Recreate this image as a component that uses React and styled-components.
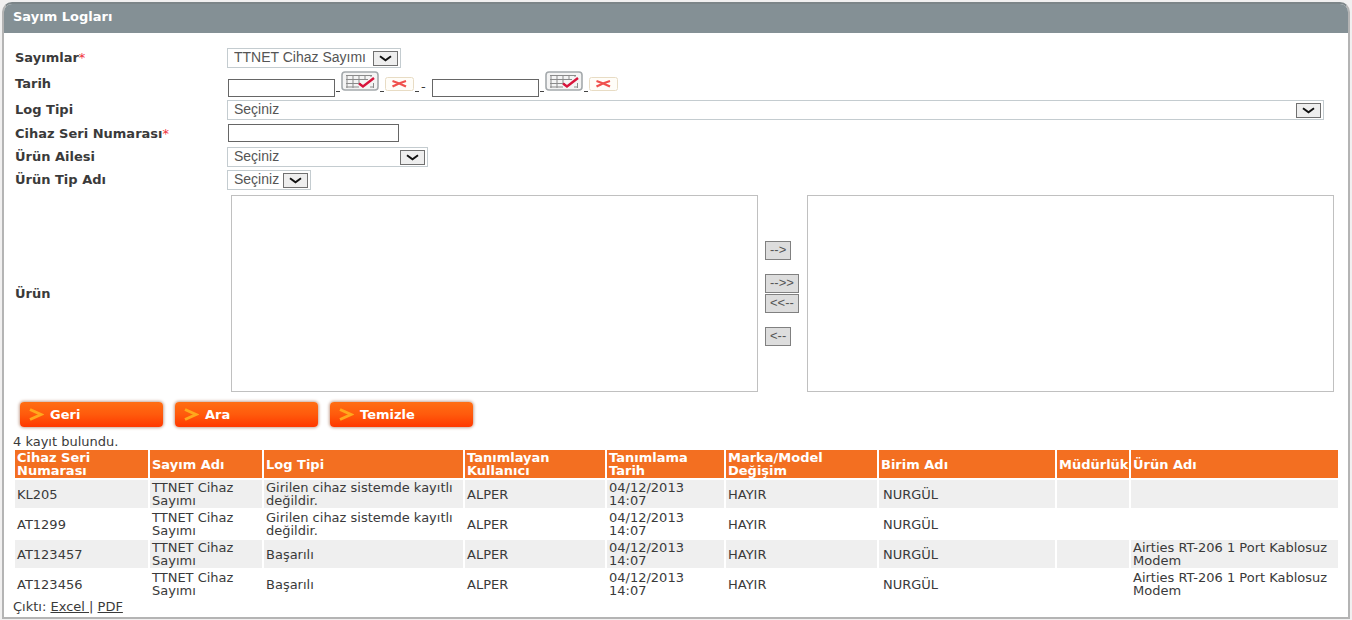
import React, { useState } from 'react'
import styled, { createGlobalStyle } from 'styled-components'

const GlobalStyle = createGlobalStyle`
  * {
    box-sizing: border-box;
  }

  body {
    margin: 0;
    padding: 2px;
    background: #f1f0f0;
    color: #3a3a3a;
    font: 13px/13px Verdana, 'DejaVu Sans', sans-serif;
  }
`

const Panel = styled.main`
  background: white;
  border: 2px solid #b4b4b4;
  border-top-color: #7c8588;
  border-radius: 10px 10px 0 0;
  overflow: hidden;
`

const Title = styled.h1`
  margin: 0;
  padding: 6px 9px 10px;
  background: #849095;
  color: white;
  font-size: 13px;
  line-height: 13px;
`

const Body = styled.div`
  padding: 13px 8px 4px 9px;
`

const Form = styled.form`
  display: flex;
  flex-direction: column;
`

const Row = styled.div`
  display: flex;
  align-items: center;
  min-height: ${props => props.$height || 23}px;
  padding-right: 6px;
`

const Label = styled.label`
  flex: 0 0 214px;
  padding-left: 2px;
  font-weight: bold;
`

const Star = styled.span`
  color: #f0323c;
  font-weight: normal;
`

const SelectBox = styled.span`
  position: relative;
  display: flex;
  width: ${props => props.$width || '100%'};
  margin-right: 10px;
`

const Select = styled.select`
  appearance: none;
  width: 100%;
  height: 20px;
  padding: 0 28px 2px 6px;
  border: 1px solid #c4ccd0;
  border-radius: 0;
  background: white;
  color: #555;
  font: 14px/16px Arial, 'Liberation Sans', sans-serif;
`

const Arrow = styled.span`
  position: absolute;
  top: 3px;
  right: 3px;
  display: flex;
  align-items: center;
  justify-content: center;
  width: 25px;
  height: 15px;
  border: 1px solid #707070;
  background: #eee;
  pointer-events: none;
`

const Input = styled.input`
  width: ${props => props.$width}px;
  height: 18px;
  margin-left: 1px;
  padding: 0 4px;
  border: 1px solid #666;
  font: 14px/16px Arial, 'Liberation Sans', sans-serif;
`

const Dates = styled.div`
  display: flex;
  align-items: flex-end;
  height: 26px;
`

const Gap = styled.span`
  width: 4px;
  height: 6px;
  margin: 0 1px;
  border-top: 1px solid #444;
`

const Hyphen = styled.span`
  width: 11px;
  padding-left: 1px;
  height: 17px;
`

const IconButton = styled.button`
  display: flex;
  align-self: ${props => props.$align || 'flex-start'};
  padding: 0;
  border: 0;
  background: none;
`

const Lists = styled.div`
  display: flex;
  flex: 1;
  gap: 7px;
  padding-left: 4px;
`

const List = styled.select`
  flex: 1;
  min-width: 0;
  height: 197px;
  border: 1px solid #c0c0c0;
  border-radius: 0;
  background: white;
`

const Moves = styled.div`
  display: flex;
  flex-direction: column;
  align-items: flex-start;
  width: 35px;
  padding-top: 46px;
`

const Move = styled.button`
  height: 19px;
  margin-bottom: ${props => props.$after}px;
  padding: 0 4px 1px;
  border: 1px solid #808080;
  background: #ddd;
  color: #555;
  font: 13px/14px Arial, 'Liberation Sans', sans-serif;
`

const Actions = styled.div`
  display: flex;
  gap: 12px;
  padding: 6px 7px 8px;
`

const Action = styled.button`
  display: flex;
  align-items: center;
  gap: 6px;
  width: 143px;
  height: 25px;
  padding: 0 9px;
  border: 0;
  border-radius: 4px;
  background: linear-gradient(#ff6e14, #ff5a0c 50%, #ff3800);
  box-shadow: 0 0 3px 1px #c8a898;
  color: white;
  font: bold 13px/13px Verdana, 'DejaVu Sans', sans-serif;
`

const Table = styled.table`
  width: 100%;
  table-layout: fixed;
  border-spacing: 2px;
`

const Th = styled.th`
  height: 28px;
  padding: 1px 0 1px 2px;
  background: #f36f21;
  color: white;
  text-align: left;
`

const Td = styled.td`
  height: 28px;
  padding: 1px 0 1px ${props => props.$indent ? 4 : 2}px;
`

const Tr = styled.tr`
  &:nth-child(odd) td {
    background: #efefef;
  }
`

const Link = styled.a`
  color: #3a3a3a;
  white-space: pre;
`

const columns = [
  ['Cihaz Seri Numarası', 133],
  ['Sayım Adı', 112],
  ['Log Tipi', 199],
  ['Tanımlayan Kullanıcı', 140],
  ['Tanımlama Tarih', 117],
  ['Marka/Model Değişim', 151],
  ['Birim Adı', 176],
  ['Müdürlük', 72],
  ['Ürün Adı', 207]
]

const missing = 'Girilen cihaz sistemde kayıtlı değildir.'
const modem = 'Airties RT-206 1 Port Kablosuz Modem'

const logs = [
  ['KL205', missing, ''],
  ['AT1299', missing, ''],
  ['AT123457', 'Başarılı', modem],
  ['AT123456', 'Başarılı', modem]
].map(([serial, type, product]) => [
  serial, 'TTNET Cihaz Sayımı', type, 'ALPER', '04/12/2013 14:07', 'HAYIR', 'NURGÜL', '', product
])

const SelectField = ({ id, width, option }) => (
  <SelectBox $width={width}>
    <Select id={id}>
      <option>{option}</option>
    </Select>
    <Arrow>
      <svg width='13' height='7' viewBox='0 0 13 7' fill='none'>
        <path d='M1 1.2 L6.500 5.2 L12 1.2' stroke='#111' strokeWidth='2' />
      </svg>
    </Arrow>
  </SelectBox>
)

const CalendarIcon = () => (
  <svg width='38' height='20' viewBox='0 0 38 20' fill='none'>
    <rect x='1' y='1' width='36' height='18' rx='3' fill='#f4f4f4' stroke='#a4a9ac' strokeWidth='1.6' />
    <path d='M5 4.5H31M5 8.5H27M5 12.5H20M5 16H18M6 4V17M12 4V17M18 4V13M24 4V9M30 4V6M29 16H33M32.500 12V17' stroke='#8b8b8b' />
    <path d='M18 12.500L22 15.500L33 7' stroke='#d8143c' strokeWidth='2.4' />
  </svg>
)

const ClearIcon = () => (
  <svg width='29' height='14' viewBox='0 0 29 14' fill='none'>
    <rect x='.5' y='.5' width='28' height='13' rx='2' fill='#fffdf8' stroke='#e8dcc4' />
    <path d='M7.500 4Q14 6 21 9.500M21 4Q14 6 7.500 9.500' stroke='#f0504c' strokeWidth='2.2' />
  </svg>
)

const DateField = ({ id, label }) => {
  const [value, setValue] = useState('')

  return (
    <>
      <Input id={id} aria-label={label} $width={107} value={value} onChange={e => setValue(e.target.value)} />
      <Gap />
      <IconButton type='button' aria-label='Takvim'><CalendarIcon /></IconButton>
      <Gap />
      <IconButton type='button' aria-label='Sil' $align='center' onClick={() => setValue('')}><ClearIcon /></IconButton>
    </>
  )
}

const ActionButton = ({ children }) => (
  <Action type='button'>
    <svg width='15' height='13' viewBox='0 0 15 13' fill='none'>
      <path d='M1 1.500L12 6.500L1 11.500' stroke='#ffa81c' strokeWidth='3' />
    </svg>
    {children}
  </Action>
)

const App = () => (
  <>
    <GlobalStyle />
    <Panel>
      <Title>Sayım Logları</Title>
      <Body>
        <Form>
          <Row>
            <Label htmlFor='count'>Sayımlar<Star>*</Star></Label>
            <SelectField id='count' width='174px' option='TTNET Cihaz Sayımı' />
          </Row>
          <Row $height={29}>
            <Label htmlFor='start'>Tarih</Label>
            <Dates>
              <DateField id='start' label='Tarih başlangıç' />
              <Gap />
              <Hyphen>-</Hyphen>
              <DateField id='end' label='Tarih bitiş' />
            </Dates>
          </Row>
          <Row>
            <Label htmlFor='logType'>Log Tipi</Label>
            <SelectField id='logType' option='Seçiniz' />
          </Row>
          <Row $height={24}>
            <Label htmlFor='serial'>Cihaz Seri Numarası<Star>*</Star></Label>
            <Input id='serial' $width={171} />
          </Row>
          <Row>
            <Label htmlFor='family'>Ürün Ailesi</Label>
            <SelectField id='family' width='201px' option='Seçiniz' />
          </Row>
          <Row>
            <Label htmlFor='typeName'>Ürün Tip Adı</Label>
            <SelectField id='typeName' width='84px' option='Seçiniz' />
          </Row>
          <Row $height={205}>
            <Label htmlFor='product'>Ürün</Label>
            <Lists>
              <List id='product' multiple />
              <Moves>
                <Move type='button' $after={14}>--&gt;</Move>
                <Move type='button' $after={1}>--&gt;&gt;</Move>
                <Move type='button' $after={14}>&lt;&lt;--</Move>
                <Move type='button' $after={0}>&lt;--</Move>
              </Moves>
              <List aria-label='Seçilen ürünler' multiple />
            </Lists>
          </Row>
          <Actions>
            <ActionButton>Geri</ActionButton>
            <ActionButton>Ara</ActionButton>
            <ActionButton>Temizle</ActionButton>
          </Actions>
        </Form>

        <div>4 kayıt bulundu.</div>
        <Table>
          <colgroup>
            {columns.map(([name, width]) => <col key={name} style={{ width }} />)}
          </colgroup>
          <thead>
            <tr>{columns.map(([name]) => <Th key={name}>{name}</Th>)}</tr>
          </thead>
          <tbody>
            {logs.map(log => (
              <Tr key={log[0]}>
                {log.map((text, i) => <Td key={columns[i][0]} $indent={i === 6}>{text}</Td>)}
              </Tr>
            ))}
          </tbody>
        </Table>
        <div>
          Çıktı: <Link href='#excel'>{'Excel '}</Link>| <Link href='#pdf'>PDF</Link>
        </div>
      </Body>
    </Panel>
  </>
)

export default App
